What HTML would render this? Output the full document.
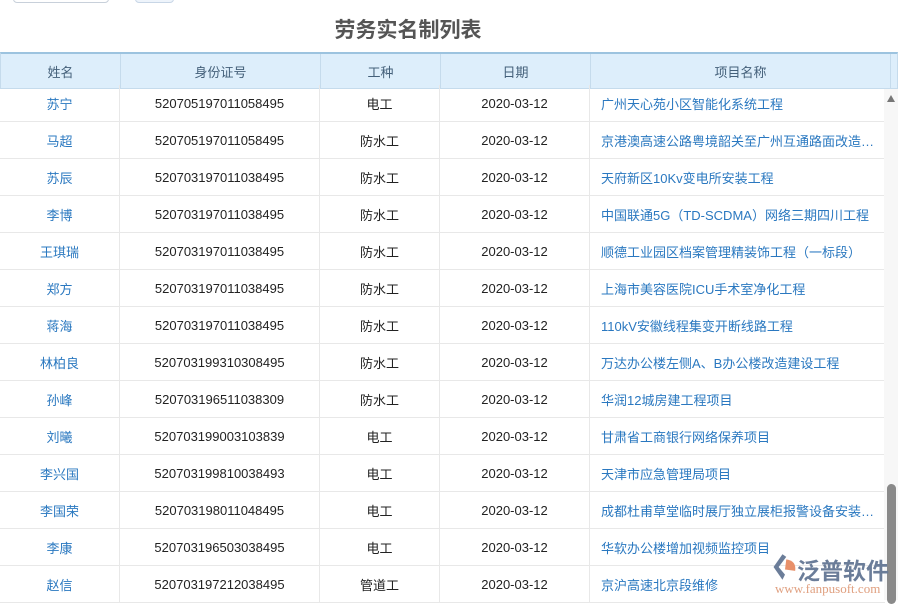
<!DOCTYPE html>
<html><head><meta charset="utf-8"><style>
*{margin:0;padding:0;box-sizing:border-box}
body{width:900px;height:600px;overflow:hidden;background:#fff;font-family:"Liberation Sans","Noto Sans CJK SC",sans-serif;position:relative}
.inp{position:absolute;left:13px;top:-10px;width:96px;height:13px;border:1px solid #c8d0da;border-radius:4px}
.btn{position:absolute;left:135px;top:-10px;width:39px;height:13px;border:1px solid #c8d6e6;border-radius:4px;background:#eef4fb}
h1{position:absolute;left:0;top:14px;width:816px;text-align:center;font-size:21px;color:#555;font-weight:bold}
.hdr{position:absolute;left:0;top:52px;width:898px;height:37px;background:#ddeefb;border-top:2px solid #9cc3df;border-bottom:1px solid #c5dbec;border-left:1px solid #c5dbec;border-right:1px solid #c5dbec}
.c{position:absolute;top:0;height:100%;display:flex;align-items:center;justify-content:center;font-size:13px}
.hdr .c{color:#44607a;border-right:1px solid #c5dbec}
.row{position:absolute;left:0;width:885px;height:37px;border-bottom:1px solid #e8e8e8}
.row .c{border-right:1px solid #e8e8e8;color:#222}
.row .n{color:#2a78c0}
.row .p{justify-content:flex-start;padding-left:11px;color:#2a78c0;white-space:nowrap;overflow:hidden}
.sb{position:absolute;left:884px;top:89px;width:14px;height:511px;background:#f7f7f7}
.thumb{position:absolute;left:887px;top:484px;width:9px;height:120px;background:#8a8a8a;border-radius:5px}
.arrow{position:absolute;left:887px;top:95px;width:0;height:0;border-left:4px solid transparent;border-right:4px solid transparent;border-bottom:7px solid #777}
.logo{position:absolute;left:797px;top:552px;font-size:23px;color:#6b7d99;font-weight:bold;letter-spacing:0}
.url{position:absolute;left:775px;top:581px;font-size:13px;color:#e0a080;font-family:"Liberation Serif",serif}
</style></head><body>
<div class="inp"></div><div class="btn"></div>
<h1>劳务实名制列表</h1>
<div class="hdr">
<div class="c" style="left:0;width:120px">姓名</div>
<div class="c" style="left:120px;width:200px">身份证号</div>
<div class="c" style="left:320px;width:120px">工种</div>
<div class="c" style="left:440px;width:150px">日期</div>
<div class="c" style="left:590px;width:300px">项目名称</div>
</div>
<div id="rows"></div>
<div class="sb"></div><div class="arrow"></div><div class="thumb"></div>
<svg style="position:absolute;left:772px;top:553px" width="26" height="28" viewBox="0 0 20 22"><path d="M8 1 L1 11 L8 21 L10 17 L5 11 L11 3Z" fill="#6b7d99"/><path d="M11 5 Q19 6 18 14 L10 13Z" fill="#e8906a"/></svg>
<div class="logo">泛普软件</div>
<div class="url">www.fanpusoft.com</div>
<script>
var d=[["苏宁","520705197011058495","电工","广州天心苑小区智能化系统工程"],
["马超","520705197011058495","防水工","京港澳高速公路粤境韶关至广州互通路面改造…"],
["苏辰","520703197011038495","防水工","天府新区10Kv变电所安装工程"],
["李博","520703197011038495","防水工","中国联通5G（TD-SCDMA）网络三期四川工程"],
["王琪瑞","520703197011038495","防水工","顺德工业园区档案管理精装饰工程（一标段）"],
["郑方","520703197011038495","防水工","上海市美容医院ICU手术室净化工程"],
["蒋海","520703197011038495","防水工","110kV安徽线程集变开断线路工程"],
["林柏良","520703199310308495","防水工","万达办公楼左侧A、B办公楼改造建设工程"],
["孙峰","520703196511038309","防水工","华润12城房建工程项目"],
["刘曦","520703199003103839","电工","甘肃省工商银行网络保养项目"],
["李兴国","520703199810038493","电工","天津市应急管理局项目"],
["李国荣","520703198011048495","电工","成都杜甫草堂临时展厅独立展柜报警设备安装…"],
["李康","520703196503038495","电工","华软办公楼增加视频监控项目"],
["赵信","520703197212038495","管道工","京沪高速北京段维修"]];
var h="";d.forEach(function(r,i){h+='<div class="row" style="top:'+(85+i*37)+'px"><div class="c n" style="left:0;width:120px">'+r[0]+'</div><div class="c" style="left:120px;width:200px">'+r[1]+'</div><div class="c" style="left:320px;width:120px">'+r[2]+'</div><div class="c" style="left:440px;width:150px">2020-03-12</div><div class="c p" style="left:590px;width:295px;border-right:none">'+r[3]+'</div></div>';});
document.getElementById("rows").innerHTML=h;
</script>
</body></html>
